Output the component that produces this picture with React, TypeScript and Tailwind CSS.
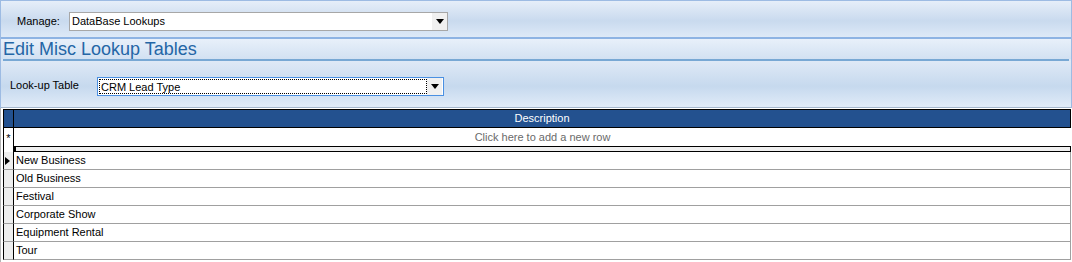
import React from "react";

const rows = ["New Business", "Old Business", "Festival", "Corporate Show", "Equipment Rental", "Tour"];

function Arrow() {
  return (
    <svg width="8" height="5" viewBox="0 0 8 5" className="block">
      <path d="M0 0 H8 L4 5 Z" fill="#000" />
    </svg>
  );
}

export default function App() {
  return (
    <div className="w-[1072px] h-[262px] overflow-hidden bg-white font-['Liberation_Sans',Arial,sans-serif] text-[11px] text-black">
      {/* top region */}
      <div className="flex flex-col border-x border-t border-[#9dbbe3] bg-[#dbe7f5]">
        {/* Manage panel */}
        <div className="h-[36px] flex items-start pt-[11px] pl-[16px] bg-[linear-gradient(#e6eef9,#c9daee_55%,#dde9f7)]">
          <span className="w-[52px] leading-[19px]">Manage:</span>
          <div className="flex items-center w-[379px] h-[19px] border border-[#a7a7a7] bg-white">
            <span className="flex-1 pl-[2px]">DataBase Lookups</span>
            <div className="w-[15px] h-[17px] bg-[#f0f0f0] flex items-center justify-center">
              <Arrow />
            </div>
          </div>
        </div>
        <div className="h-[2px] bg-[#8db3e3]" />
        {/* Title */}
        <div className="h-[20px] flex items-center pl-[2px] bg-[linear-gradient(#e8f0fa,#d2e1f2)]">
          <span className="text-[18px] leading-[20px] text-[#2466a6]">Edit Misc Lookup Tables</span>
        </div>
        <div className="h-[2px] mx-[2px] bg-[#78a8d4]" />
        {/* Lookup panel */}
        <div className="h-[47px] flex items-start pt-[16px] pl-[9px] bg-[linear-gradient(#dfe9f6,#c6d9ee_55%,#e0ebf8)] border-b border-[#a3b6cc]">
          <span className="w-[87px] leading-[17px]">Look-up Table</span>
          <div className="flex items-center w-[347px] h-[19px] border border-[#4a90e2] bg-white px-[1px]">
            <span className="flex-1 h-[15px] leading-[14px] border border-dotted border-black pl-[1px]">CRM Lead Type</span>
            <div className="w-[15px] h-[17px] bg-[#f0f0f0] flex items-center justify-center">
              <Arrow />
            </div>
          </div>
        </div>
      </div>

      {/* grid */}
      <div className="flex flex-col border-l border-[#b4b4b4] pl-[2px] pr-[1px] pt-[1px] h-[154px]">
        {/* header */}
        <div className="flex h-[19px] border-y border-black bg-[#23518f]">
          <div className="w-[11px] border-x border-black" />
          <div className="flex-1 border-r border-black text-white text-center leading-[17px]">Description</div>
        </div>
        {/* new row */}
        <div className="flex h-[18px]">
          <div className="w-[11px] border-x border-black flex items-center justify-center text-[11px] leading-none pt-[3px]">*</div>
          <div className="flex-1 text-center text-[#6a6a6a] leading-[18px]">Click here to add a new row</div>
        </div>
        {/* separator */}
        <div className="flex h-[6px]">
          <div className="w-[11px] border-x border-black" />
          <div className="flex-1 border border-black bg-[#efefef] border-l-2" />
        </div>
        {rows.map((r, i) => (
          <div key={r} className="flex h-[18px]">
            <div className="w-[11px] border-x border-black border-b border-b-[#a0a0a0] bg-[#eeeeee] flex items-center pl-[1px]">
              {i === 0 && (
                <svg width="5" height="8" viewBox="0 0 5 8" className="block">
                  <path d="M0 0 L5 4 L0 8 Z" fill="#000" />
                </svg>
              )}
            </div>
            <div className="flex-1 border-b border-r border-[#a0a0a0] pl-[2px] leading-[17px]">{r}</div>
          </div>
        ))}
      </div>
    </div>
  );
}
